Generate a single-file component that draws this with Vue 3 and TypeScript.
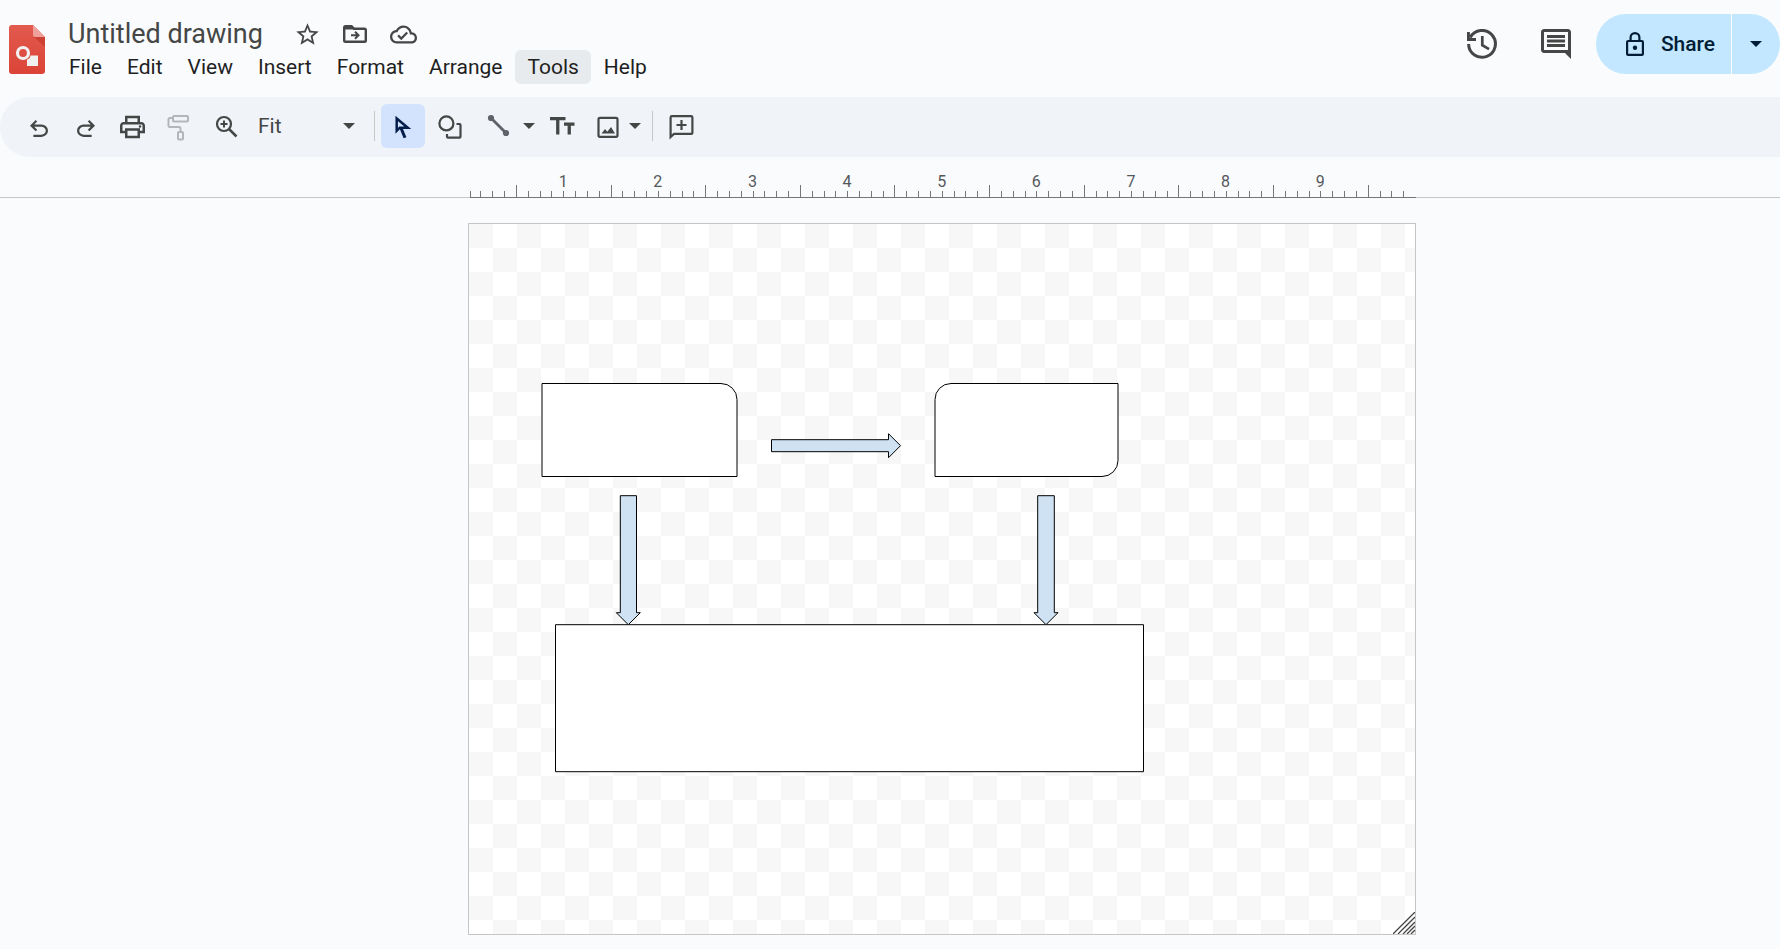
<script setup lang="ts">
import { ref } from 'vue'

const title = ref('Untitled drawing')
const zoom = ref('Fit')
const menus: string[] = ['File', 'Edit', 'View', 'Insert', 'Format', 'Arrange', 'Tools', 'Help']
const activeMenu = ref('Tools')

interface Tick {
  x: number
  major: boolean
}

const UNIT = 11.83
const ticks: Tick[] = Array.from({ length: 80 }, (_, i) => ({
  x: i === 0 ? 2 : Math.round(i * UNIT + 0.6),
  major: i % 8 === 4,
}))
const labels: number[] = [1, 2, 3, 4, 5, 6, 7, 8, 9]
</script>

<template>
  <div class="app">
    <header class="header">
      <a class="logo" href="#" aria-label="Drawings home">
        <svg width="36" height="49" viewBox="0 0 36 49">
          <defs>
            <linearGradient id="sheet" x1="0" y1="0" x2="0" y2="1">
              <stop offset="0" stop-color="#e25a4e" />
              <stop offset="1" stop-color="#db4437" />
            </linearGradient>
          </defs>
          <path d="M3 0H24L36 12V46a3 3 0 0 1-3 3H3a3 3 0 0 1-3-3V3a3 3 0 0 1 3-3z" fill="url(#sheet)" />
          <path d="M25 12H36V22z" fill="#c53a2e" opacity=".7" />
          <path d="M24 0L36 12H26a2 2 0 0 1-2-2z" fill="#f0a19b" />
          <circle cx="14" cy="28" r="5.500" fill="none" stroke="#f1f1f1" stroke-width="3.200" />
          <path d="M21.500 30.500H29V41H18V34.500q3-.5 3.500-4z" fill="#f1f1f1" />
        </svg>
      </a>

      <div class="doc">
        <div class="title-row">
          <input v-model="title" class="title" type="text" aria-label="Rename" />
          <button class="mini" type="button" aria-label="Star">
            <svg width="27" height="27" viewBox="0 0 24 24"><path fill="currentColor" d="M22 9.240l-7.190-.62L12 2 9.190 8.630 2 9.240l5.460 4.730L5.820 21 12 17.270 18.180 21l-1.630-7.030L22 9.240zM12 15.400l-3.760 2.270 1-4.280-3.320-2.880 4.380-.38L12 6.100l1.710 4.040 4.380.38-3.320 2.880 1 4.280L12 15.400z" /></svg>
          </button>
          <button class="mini" type="button" aria-label="Move">
            <svg width="24" height="18" viewBox="0 0 24 18">
              <path d="M1.200 15.500V2.500q0-1.300 1.300-1.300H8.500L11 3.700H21.500q1.300 0 1.300 1.300V15.500q0 1.300-1.300 1.300H2.500q-1.300 0-1.300-1.300z" fill="none" stroke="currentColor" stroke-width="2.400" />
              <path d="M1 1H9L11 4.500H1z" fill="currentColor" />
              <path d="M8 10.300h7M12 6.800l3.500 3.500-3.500 3.500" fill="none" stroke="currentColor" stroke-width="2" />
            </svg>
          </button>
          <button class="mini" type="button" aria-label="See document status">
            <svg width="27" height="27" viewBox="0 0 24 24"><path fill="currentColor" d="M19.350 10.040C18.670 6.590 15.640 4 12 4 9.110 4 6.600 5.640 5.350 8.040 2.340 8.360 0 10.910 0 14c0 3.310 2.690 6 6 6h13c2.760 0 5-2.240 5-5 0-2.640-2.050-4.780-4.650-4.960zM19 18H6c-2.210 0-4-1.790-4-4 0-2.050 1.530-3.760 3.560-3.970l1.070-.11.5-.95C8.080 7.140 9.940 6 12 6c2.620 0 4.880 1.860 5.390 4.430l.3 1.500 1.530.11c1.560.1 2.780 1.410 2.780 2.960 0 1.650-1.350 3-3 3zm-9-3.820l-2.090-2.090L6.500 13.500 10 17l6.010-6.010-1.410-1.410z" /></svg>
          </button>
        </div>
        <nav class="menus" aria-label="Menu bar">
          <button
            v-for="m in menus"
            :key="m"
            type="button"
            class="menu"
            :class="{ hovered: m === activeMenu }"
            @mouseenter="activeMenu = m"
          >{{ m }}</button>
        </nav>
      </div>

      <div class="actions">
        <button class="round" type="button" aria-label="Last edit">
          <svg width="30" height="30" viewBox="0 0 30 30" fill="none" stroke="currentColor">
            <path d="M3.200 8.500A13.400 13.400 0 1 1 1.600 15" stroke-width="3" />
            <path d="M1.400 3V10.500H9" stroke-width="3" />
            <path d="M15.300 7V16.200L22 20.200" stroke-width="2.700" />
          </svg>
        </button>
        <button class="round" type="button" aria-label="Open comment history">
          <svg width="36" height="36" viewBox="0 0 24 24"><path fill="currentColor" d="M21.990 4c0-1.100-.89-2-1.990-2H4c-1.100 0-2 .9-2 2v12c0 1.100.9 2 2 2h14l4 4-.01-18zM20 4v12H4V4h16zM6 12h12v2H6zm0-3h12v2H6zm0-3h12v2H6z" /></svg>
        </button>
        <div class="share">
          <button class="share-main" type="button">
            <svg width="18" height="24" viewBox="0 0 18 24" fill="none" stroke="currentColor" stroke-width="2.200">
              <rect x="1.100" y="9" width="15.800" height="13.900" rx="1" />
              <path d="M4.600 9V5.500a4.400 4.400 0 0 1 8.800 0V9" />
              <circle cx="9" cy="15.800" r="2.200" fill="currentColor" stroke="none" />
            </svg>
            <span>Share</span>
          </button>
          <button class="share-more" type="button" aria-label="Quick sharing actions">
            <svg width="12" height="6" viewBox="0 0 12 6"><path fill="currentColor" d="M0 0H12L6 6z" /></svg>
          </button>
        </div>
      </div>
    </header>

    <div class="toolbar" role="toolbar" aria-label="Drawing tools">
      <button class="tool" type="button" aria-label="Undo">
        <svg width="30" height="30" viewBox="0 0 30 30"><path transform="translate(1.500 4.500) scale(1.125)" fill="currentColor" d="M7 19v-2h7.100q1.575 0 2.738-1T18 13.500 16.838 11 14.100 10H7.800l2.600 2.600L9 14 4 9l5-5 1.400 1.400L7.800 8h6.300q2.425 0 4.163 1.575T20 13.500t-1.737 3.925T14.100 19z" /></svg>
      </button>
      <button class="tool" type="button" aria-label="Redo">
        <svg width="30" height="30" viewBox="0 0 30 30"><path transform="translate(28.500 4.500) scale(-1.125 1.125)" fill="currentColor" d="M7 19v-2h7.100q1.575 0 2.738-1T18 13.500 16.838 11 14.100 10H7.800l2.600 2.600L9 14 4 9l5-5 1.400 1.400L7.800 8h6.300q2.425 0 4.163 1.575T20 13.500t-1.737 3.925T14.100 19z" /></svg>
      </button>
      <button class="tool" type="button" aria-label="Print">
        <svg width="30" height="30" viewBox="0 0 30 30">
          <g transform="translate(-0.500 1) scale(1.250)" fill="currentColor">
            <path d="M19 8h-1V3H6v5H5c-1.660 0-3 1.340-3 3v6h4v4h12v-4h4v-6c0-1.660-1.340-3-3-3zM8 5h8v3H8V5zm8 12v2H8v-4h8v2zm2-2v-2H6v2H4v-4c0-.55.45-1 1-1h14c.55 0 1 .45 1 1v4h-2z" />
            <circle cx="18" cy="11.500" r="1" />
          </g>
        </svg>
      </button>
      <button class="tool" type="button" aria-label="Paint format" disabled>
        <svg width="30" height="30" viewBox="0 0 30 30" fill="none" stroke="currentColor" stroke-width="2">
          <rect x="8" y="5" width="15" height="5.500" rx="1" />
          <path d="M8 7H5Q3.500 7 3.500 8.500V14.500Q3.500 16 5 16H14Q15.500 16 15.500 17.500V21" />
          <rect x="13" y="21" width="5" height="7.500" rx="1" />
        </svg>
      </button>
      <button class="tool" type="button" aria-label="Zoom in">
        <svg width="30" height="30" viewBox="0 0 30 30" fill="none" stroke="currentColor" stroke-width="2.200">
          <circle cx="12" cy="13" r="7" />
          <path d="M17 18L24.500 25.500" stroke-width="2.500" />
          <path d="M12 9.500v7M8.500 13h7" stroke-width="2" />
        </svg>
      </button>
      <label class="zoom">
        <select v-model="zoom" aria-label="Zoom">
          <option>Fit</option>
          <option>50%</option>
          <option>100%</option>
          <option>200%</option>
        </select>
        <svg width="12" height="6" viewBox="0 0 12 6"><path fill="currentColor" d="M0 0H12L6 6z" /></svg>
      </label>
      <span class="divider"></span>
      <button class="tool selected" type="button" aria-label="Select" aria-pressed="true">
        <svg width="30" height="30" viewBox="0 0 30 30" fill="none" stroke="currentColor">
          <path d="M8.700 7.500V19.800L11.800 16.700H19.800z" stroke-width="2.500" />
          <path d="M13 17L17 26.800" stroke-width="3" />
        </svg>
      </button>
      <button class="tool" type="button" aria-label="Shape">
        <svg width="30" height="30" viewBox="0 0 30 30" fill="none" stroke="currentColor" stroke-width="2.200">
          <circle cx="11.400" cy="12.400" r="7" />
          <path d="M21.500 13H24.500Q25.500 13 25.500 14V25.500Q25.500 26.600 24.500 26.600H13Q12 26.600 12 25.500V23" />
        </svg>
      </button>
      <button class="tool" type="button" aria-label="Line">
        <svg class="soft" width="30" height="30" viewBox="0 0 30 30">
          <path d="M9 7L24 22" stroke="currentColor" stroke-width="2.800" />
          <circle cx="9" cy="7" r="3.100" fill="currentColor" />
          <circle cx="24" cy="22" r="3.100" fill="currentColor" />
        </svg>
      </button>
      <button class="caret wide" type="button" aria-label="Line options">
        <svg width="12" height="6" viewBox="0 0 12 6"><path fill="currentColor" d="M0 0H12L6 6z" /></svg>
      </button>
      <button class="tool narrow" type="button" aria-label="Text box">
        <svg width="30" height="30" viewBox="0 0 30 30" fill="currentColor">
          <path d="M3 6H18.500V9.200H12.400V23.500H9.100V9.200H3zM17 11.500H27.500V14.700H23.900V23.500H20.600V14.700H17z" />
        </svg>
      </button>
      <button class="tool" type="button" aria-label="Image">
        <svg width="30" height="30" viewBox="0 0 30 30">
          <rect x="6.500" y="6.800" width="19" height="19" rx="1.500" fill="none" stroke="currentColor" stroke-width="2.200" />
          <path d="M9.500 22.500L13 18l2.300 2.700L19 16l4 6.500z" fill="currentColor" />
        </svg>
      </button>
      <button class="caret" type="button" aria-label="Image options">
        <svg width="12" height="6" viewBox="0 0 12 6"><path fill="currentColor" d="M0 0H12L6 6z" /></svg>
      </button>
      <span class="divider"></span>
      <button class="tool" type="button" aria-label="Add comment">
        <svg width="30" height="30" viewBox="0 0 30 30" fill="none" stroke="currentColor" stroke-width="2.200">
          <path d="M4.600 26V6.500Q4.600 5.200 6 5.200H25Q26.400 5.200 26.400 6.500V21.500Q26.400 22.900 25 22.900H8L4.600 26z" />
          <path d="M15.500 9v10M10.500 14h10" />
        </svg>
      </button>
    </div>

    <div class="ruler">
      <svg class="scale" viewBox="0 0 948 40">
        <path class="mark" d="M3 39.500H948" />
        <path
          v-for="t in ticks"
          :key="t.x"
          class="mark"
          :d="`M${t.x + 0.5} ${t.major ? 27 : 33}V40`"
        />
        <text v-for="n in labels" :key="n" :x="n * 8 * UNIT + 0.5" y="29" text-anchor="middle">{{ n }}</text>
      </svg>
    </div>

    <main class="workspace">
      <section class="page" aria-label="Drawing canvas">
        <svg class="drawing" viewBox="0 0 946 710">
          <g stroke="#000" stroke-width="1">
            <path d="M73 159.500H252a16 16 0 0 1 16 16V252.500H73z" fill="#fff" />
            <path d="M482 159.500H649V236.500a16 16 0 0 1-16 16H466V175.500a16 16 0 0 1 16-16z" fill="#fff" />
            <path d="M86.500 400.700H674.500V547.700H86.500z" fill="#fff" />
            <path d="M302.500 215.700H419.500V209.700L431.500 221.700 419.500 233.700V227.700H302.500z" fill="#cfe2f3" />
            <path d="M151.300 271.700H167.500V388.700H171.300L159.300 400.700 147.300 388.700H151.300z" fill="#cfe2f3" />
            <path d="M568.700 271.700H585.300V388.700H589L577 400.700 565 388.700H568.700z" fill="#cfe2f3" />
          </g>
        </svg>
        <svg class="grip" width="22" height="22" viewBox="0 0 22 22">
          <path d="M0 22L22 0M5 22L22 5M10 22L22 10M14 22L22 14M18 22L22 18" stroke="#444" stroke-width="1.300" />
        </svg>
      </section>
    </main>
  </div>
</template>

<style>
html,
body {
  margin: 0;
  background: #f9fbfd;
}
</style>

<style scoped>
.app {
  box-sizing: border-box;
  min-height: 100vh;
  background: #f9fbfd;
  color: #1f1f1f;
  font-family: Roboto, "Liberation Sans", sans-serif;
}

button,
input,
select {
  margin: 0;
  padding: 0;
  border: 0;
  background: none;
  color: inherit;
  font: inherit;
}

button {
  display: flex;
  align-items: center;
  justify-content: center;
  cursor: pointer;
}

svg {
  display: block;
  flex: none;
}

.header {
  display: flex;
  align-items: flex-start;
  height: 97px;
}

.logo {
  margin: 25px 0 0 9px;
}

.doc {
  padding: 18px 0 0 12px;
}

.title-row {
  display: flex;
  align-items: center;
  height: 32px;
  padding-left: 11px;
  color: #444746;
}

.title {
  width: 215px;
  height: 32px;
  font-size: 27px;
  line-height: 32px;
}

.mini {
  width: 48px;
  height: 32px;
}

.menus {
  display: flex;
  gap: 1px;
}

.menu {
  height: 34px;
  padding: 0 12px;
  border-radius: 6px;
  font-size: 21px;
  line-height: 34px;
}

.hovered {
  background: #e8ebee;
}

.actions {
  display: flex;
  align-items: center;
  gap: 14px;
  margin-left: auto;
  padding-top: 14px;
  color: #444746;
}

.round {
  width: 60px;
  height: 60px;
  border-radius: 30px;
}

.share {
  display: flex;
  gap: 1px;
  margin-left: -4px;
  color: #001d35;
}

.share-main {
  gap: 17px;
  width: 135px;
  height: 60px;
  padding-left: 14px;
  box-sizing: border-box;
  border-radius: 30px 0 0 30px;
  background: #c2e7ff;
  font-size: 21px;
  font-weight: 500;
}

.share-more {
  width: 48px;
  height: 60px;
  border-radius: 0 30px 30px 0;
  background: #c2e7ff;
}

.toolbar {
  display: flex;
  align-items: center;
  gap: 3px;
  box-sizing: border-box;
  height: 60px;
  padding: 0 17px 2px;
  border-radius: 30px 0 0 30px;
  background: #f0f3f8;
  color: #444746;
}

.tool {
  width: 44px;
  height: 44px;
  border-radius: 6px;
}

.tool.narrow {
  width: 40px;
}

.tool:disabled {
  color: #b4b7ba;
}

.selected {
  background: #d3e3fd;
  color: #041e49;
}

.soft {
  color: #5f6368;
}

.caret {
  width: 12px;
  height: 44px;
  margin-left: -3px;
}

.caret.wide {
  width: 20px;
}

.zoom {
  display: grid;
  align-items: center;
  width: 111px;
  height: 44px;
}

.zoom select,
.zoom svg {
  grid-area: 1 / 1;
}

.zoom select {
  width: 100%;
  height: 44px;
  padding-left: 6px;
  appearance: none;
  font-size: 21px;
}

.zoom svg {
  justify-self: end;
  margin-right: 8px;
  pointer-events: none;
}

.divider {
  width: 1px;
  height: 30px;
  margin: 0 3px 0 8px;
  background: #c7c7c7;
}

.ruler {
  display: flex;
  justify-content: center;
  padding: 1px 0 0 104px;
  border-bottom: 1px solid #c4c7c5;
}

.scale {
  width: 100%;
  max-width: 948px;
  margin-bottom: -1px;
  flex: 0 1 auto;
  overflow: visible;
}

.mark {
  fill: none;
  stroke: #747775;
  stroke-width: 1;
}

.scale text {
  fill: #55585b;
  font-size: 16px;
}

.workspace {
  display: flex;
  justify-content: center;
  padding: 25px 0 14px 104px;
}

.page {
  position: relative;
  box-sizing: border-box;
  width: 100%;
  max-width: 948px;
  border: 1px solid #c4c7c5;
  background: conic-gradient(#fff 25%, #f7f7f7 0 50%, #fff 0 75%, #f7f7f7 0) 0 0 / 48px 48px;
}

.drawing {
  width: 100%;
}

.grip {
  position: absolute;
  right: 0;
  bottom: 0;
}
</style>
